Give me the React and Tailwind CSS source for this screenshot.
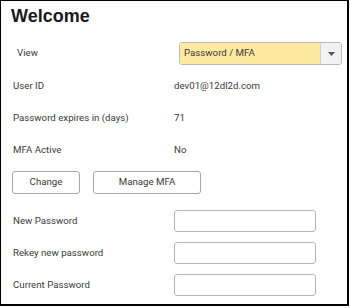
import React from 'react';

const Row = ({ label, children, className = '' }) => (
  <div className={`flex items-center ${className}`}>
    <div className="w-[161px] shrink-0">{label}</div>
    <div>{children}</div>
  </div>
);

const Field = () => (
  <input
    type="password"
    className="h-[22px] w-[142px] rounded-[3px] border border-[#b5b5b5] bg-white outline-none"
  />
);

export default function App() {
  return (
    <div className="h-[308px] w-[350px] bg-white font-['Roboto',sans-serif] text-[9.7px] text-[#3a3a3a]">
      <div className="h-[306px] w-[349px] border-2 border-l border-t border-black pl-[10px]">
        <h1 className="pt-[3px] font-['Liberation_Sans',sans-serif] text-[18px] font-bold leading-[24px] text-[#1a1a1a]">
          Welcome
        </h1>

        {/* view selector */}
        <div className="mt-[14px] flex items-center">
          <div className="w-[168px] shrink-0 pl-[6px]">View</div>
          <div className="flex h-[23px] w-[163px] overflow-hidden rounded-[3px] border border-[#b9b9b9]">
            <div className="flex flex-1 items-center bg-[#fde9a0] pl-[4px]">Password / MFA</div>
            <div className="flex w-[21px] items-center justify-center border-l border-[#d0d0d0] bg-[#f2f2f2]">
              <svg width="7" height="4" viewBox="0 0 7 4">
                <path d="M0 0h7L3.5 4z" fill="#555" />
              </svg>
            </div>
          </div>
        </div>

        <div className="pl-[2px]">
          <Row label="User ID" className="mt-[10px] h-[22px]">dev01@12dl2d.com</Row>
          <Row label="Password expires in (days)" className="mt-[10px] h-[22px]">71</Row>
          <Row label="MFA Active" className="mt-[10px] h-[22px]">No</Row>
        </div>

        <div className="mt-[10px] flex gap-[13px] pl-[1px]">
          <button className="h-[23px] w-[68px] rounded-[3px] border border-[#a8a8a8] bg-white">Change</button>
          <button className="h-[23px] w-[108px] rounded-[3px] border border-[#a8a8a8] bg-white">Manage MFA</button>
        </div>

        <div className="mt-[16px] flex flex-col gap-[10px] pl-[2px]">
          <Row label="New Password"><Field /></Row>
          <Row label="Rekey new password"><Field /></Row>
          <Row label="Current Password"><Field /></Row>
        </div>
      </div>
    </div>
  );
}
